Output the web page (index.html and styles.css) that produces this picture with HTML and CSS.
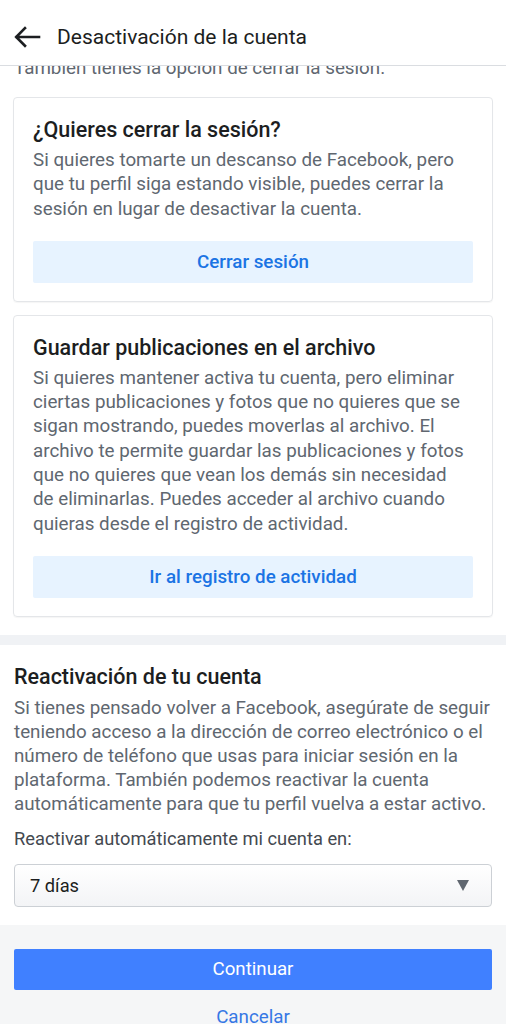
FILE: index.html
```html
<!DOCTYPE html>
<html lang="es">
<head>
<meta charset="utf-8">
<link rel="stylesheet" href="styles.css">
</head>
<body>
<header class="topbar">
  <svg class="back" width="28" height="22" viewBox="0 0 28 22" aria-hidden="true">
    <path d="M26 11H3.5M12 2.2L3.2 11L12 19.8" fill="none" stroke="#1c1e21" stroke-width="2.6" stroke-linecap="square" stroke-linejoin="miter"/>
  </svg>
  <h1 class="topbar-title">Desactivación de la cuenta</h1>
</header>

<main class="page">
  <p class="intro">También tienes la opción de cerrar la sesión.</p>

  <section class="cards">
    <div class="card">
      <h2 class="card-title">¿Quieres cerrar la sesión?</h2>
      <p class="card-text">Si quieres tomarte un descanso de Facebook, pero que tu perfil siga estando visible, puedes cerrar la sesión en lugar de desactivar la cuenta.</p>
      <div class="soft-btn">Cerrar sesión</div>
    </div>
    <div class="card">
      <h2 class="card-title">Guardar publicaciones en el archivo</h2>
      <p class="card-text">Si quieres mantener activa tu cuenta, pero eliminar ciertas publicaciones y fotos que no quieres que se sigan mostrando, puedes moverlas al archivo. El archivo te permite guardar las publicaciones y fotos que no quieres que vean los demás sin necesidad de&nbsp;eliminarlas. Puedes acceder al archivo cuando quieras desde el registro de actividad.</p>
      <div class="soft-btn">Ir al registro de actividad</div>
    </div>
  </section>

  <section class="reactivate">
    <h2 class="section-title">Reactivación de tu cuenta</h2>
    <p class="section-text">Si tienes pensado volver a Facebook, asegúrate de seguir teniendo acceso a la dirección de correo electrónico o el número de teléfono que usas para iniciar sesión en la plataforma. También podemos reactivar la cuenta automáticamente para que tu perfil vuelva a estar activo.</p>
    <p class="select-label">Reactivar automáticamente mi cuenta en:</p>
    <div class="select">
      <span>7 días</span>
      <span class="caret"></span>
    </div>
  </section>

  <footer class="actions">
    <div class="primary-btn">Continuar</div>
    <div class="cancel">Cancelar</div>
  </footer>
</main>
</body>
</html>
```

FILE: styles.css
```css
* { box-sizing: border-box; }
html, body { margin: 0; padding: 0; }
body {
  font-family: Roboto, "Noto Sans", Arial, sans-serif;
  background: #fff;
  color: #1c1e21;
  width: 506px;
  height: 1024px;
  overflow: hidden;
}
.topbar {
  position: fixed;
  top: 0; left: 0; right: 0;
  height: 66px;
  background: #fff;
  border-bottom: 1px solid #dadde1;
  display: flex;
  align-items: center;
  padding: 9px 0 0 13px;
  gap: 16px;
  z-index: 2;
}
.back { display: block; }
.topbar-title {
  margin: 0;
  font-size: 21px;
  font-weight: 400;
  color: #1c1e21;
}
.page { display: flex; flex-direction: column; }
.intro {
  margin: 56px 0 0;
  padding: 0 14px;
  font-size: 18.8px;
  line-height: 24px;
  color: #606770;
  white-space: nowrap;
}
.cards {
  display: flex;
  flex-direction: column;
  gap: 13px;
  padding: 17px 13px 18px;
}
.card {
  border: 1px solid #e4e6e9;
  border-radius: 4px;
  box-shadow: 0 1px 1px rgba(0,0,0,0.04);
  padding: 18px 19px 18px;
}
.card-title {
  margin: 0;
  font-size: 21.5px;
  line-height: 28px;
  font-weight: 500;
  color: #1c1e21;
}
.card-text {
  margin: 4px 0 0;
  font-size: 18.8px;
  line-height: 24.3px;
  color: #606770;
}
.soft-btn {
  margin-top: 20px;
  height: 42px;
  background: #e7f3ff;
  border-radius: 2px;
  display: flex;
  align-items: center;
  justify-content: center;
  font-size: 18.8px;
  font-weight: 500;
  color: #1b74e4;
}
.reactivate {
  border-top: 10px solid #f0f2f5;
  padding: 18px 14px 18px;
}
.section-title {
  margin: 0;
  font-size: 21.5px;
  line-height: 28px;
  font-weight: 500;
  color: #1c1e21;
}
.section-text {
  margin: 5px 0 0;
  font-size: 18.8px;
  line-height: 24px;
  color: #606770;
}
.select-label {
  margin: 11px 0 0;
  font-size: 18.3px;
  line-height: 24px;
  color: #444950;
}
.select {
  margin-top: 13px;
  height: 43px;
  border: 1px solid #ccd0d5;
  border-radius: 4px;
  background: linear-gradient(#ffffff, #f3f4f6);
  display: flex;
  align-items: center;
  justify-content: space-between;
  padding: 0 22px 0 15px;
  font-size: 18.3px;
  color: #1c1e21;
}
.caret {
  width: 0; height: 0;
  border-left: 6px solid transparent;
  border-right: 6px solid transparent;
  border-top: 11px solid #606770;
}
.actions {
  background: #f5f6f7;
  padding: 24px 14px 0;
  display: flex;
  flex-direction: column;
  height: 200px;
}
.primary-btn {
  height: 41px;
  background: #4080ff;
  border-radius: 2px;
  color: #fff;
  font-size: 18.7px;
  display: flex;
  align-items: center;
  justify-content: center;
}
.cancel {
  margin-top: 16px;
  text-align: center;
  font-size: 18.8px;
  color: #3578e5;
}
```
